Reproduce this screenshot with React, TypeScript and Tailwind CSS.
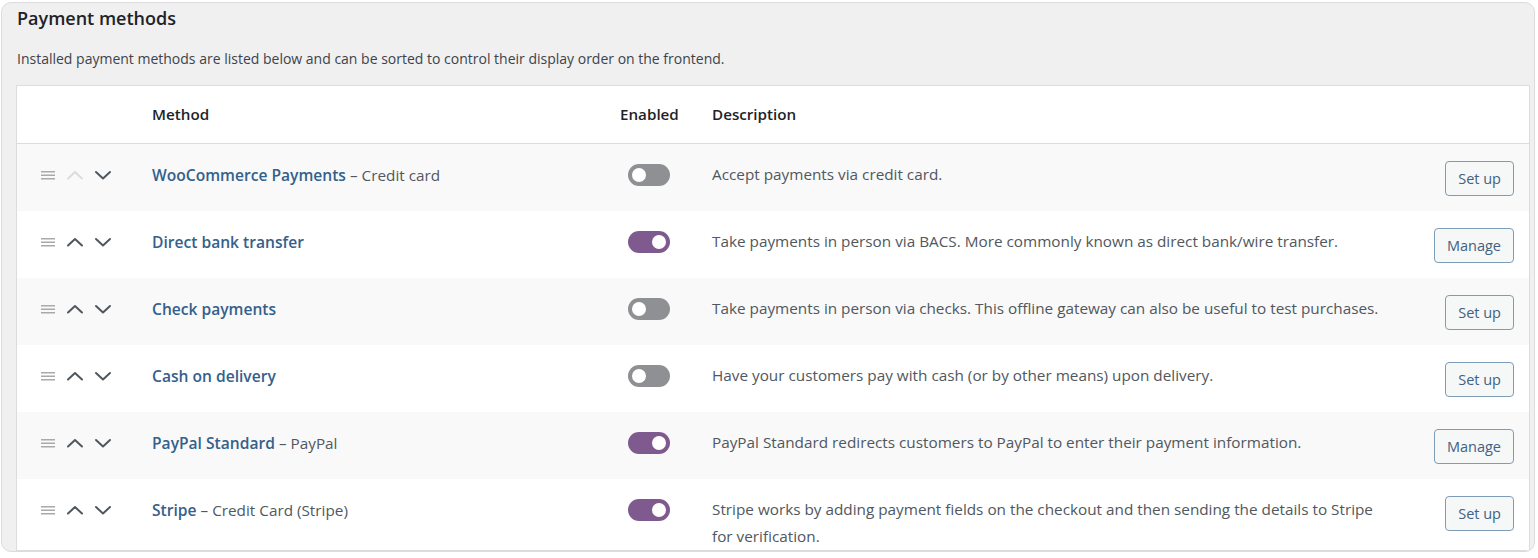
import React from "react";

type Row = {
  name: string;
  sub?: string;
  enabled: boolean;
  desc: string;
  action: "Set up" | "Manage";
  upDisabled?: boolean;
};

const rows: Row[] = [
  { name: "WooCommerce Payments", sub: "Credit card", enabled: false, desc: "Accept payments via credit card.", action: "Set up", upDisabled: true },
  { name: "Direct bank transfer", enabled: true, desc: "Take payments in person via BACS. More commonly known as direct bank/wire transfer.", action: "Manage" },
  { name: "Check payments", enabled: false, desc: "Take payments in person via checks. This offline gateway can also be useful to test purchases.", action: "Set up" },
  { name: "Cash on delivery", enabled: false, desc: "Have your customers pay with cash (or by other means) upon delivery.", action: "Set up" },
  { name: "PayPal Standard", sub: "PayPal", enabled: true, desc: "PayPal Standard redirects customers to PayPal to enter their payment information.", action: "Manage" },
  { name: "Stripe", sub: "Credit Card (Stripe)", enabled: true, desc: "Stripe works by adding payment fields on the checkout and then sending the details to Stripe for verification.", action: "Set up" },
];

function Handle() {
  return (
    <svg width="15" height="12" viewBox="0 0 15 12" className="block">
      <rect x="0" y="2" width="14" height="1.5" fill="#a7aaad" />
      <rect x="0" y="5.5" width="14" height="1.5" fill="#a7aaad" />
      <rect x="0" y="9" width="14" height="1.5" fill="#a7aaad" />
    </svg>
  );
}

function Chevron({ up, disabled }: { up?: boolean; disabled?: boolean }) {
  return (
    <svg width="18" height="12" viewBox="0 0 18 12" className="block">
      <path
        d={up ? "M2 9.5 L9 3 L16 9.5" : "M2 3 L9 9.5 L16 3"}
        fill="none"
        stroke={disabled ? "#dcdcde" : "#50575e"}
        strokeWidth="2"
        strokeLinecap="round"
        strokeLinejoin="round"
      />
    </svg>
  );
}

function Toggle({ on }: { on: boolean }) {
  return on ? (
    <div className="w-[42px] h-[22px] rounded-full bg-[#7f5a8e] flex items-center justify-end pr-[2px]">
      <div className="w-[18px] h-[18px] rounded-full bg-white border-[2px] border-[#7f5a8e]" />
    </div>
  ) : (
    <div className="w-[42px] h-[22px] rounded-full bg-[#8f9093] flex items-center pl-[2px]">
      <div className="w-[18px] h-[18px] rounded-full bg-white border-[2px] border-[#8f9093]" />
    </div>
  );
}

export default function App() {
  return (
    <div
      className="w-[1538px] h-[558px] bg-white pt-[2px] pl-[1px] pr-[3px] pb-[6px]"
      style={{ fontFamily: '"Open Sans", "Noto Sans", sans-serif' }}
    >
      <div className="h-full overflow-hidden rounded-[10px] border border-[#dcdcde] bg-[#f0f0f1] pl-[14px] pr-[4px]">
        <h2 className="pt-[3px] text-[18px] leading-[24px] font-semibold text-[#1d2327] pl-[1px]">Payment methods</h2>
        <p className="mt-[20px] text-[14px] leading-[18px] text-[#3c434a] pl-[1px]">
          Installed payment methods are listed below and can be sorted to control their display order on the frontend.
        </p>
        <div className="mt-[17px] bg-white border border-[#dcdcde]">
          <div className="grid grid-cols-[135px_468px_92px_1fr_auto] h-[58px] items-center border-b border-[#dcdcde] text-[15.2px] font-semibold text-[#1d2327]">
            <div />
            <div>Method</div>
            <div>Enabled</div>
            <div>Description</div>
            <div />
          </div>
          {rows.map((r, i) => (
            <div
              key={r.name}
              className={`grid grid-cols-[135px_468px_92px_1fr_auto] min-h-[67px] items-start ${i % 2 === 0 ? "bg-[#f9f9f9]" : "bg-white"}`}
            >
              <div className="flex items-center gap-[10px] pl-[24px] pt-[25px]">
                <Handle />
                <Chevron up disabled={r.upDisabled} />
                <Chevron />
              </div>
              <div className="pt-[19px] text-[15.3px] leading-[24px] text-[#50575e]">
                <span className="font-semibold text-[#34608c] text-[15.6px]">{r.name}</span>
                {r.sub && <span> – {r.sub}</span>}
              </div>
              <div className="pt-[20px] pl-[8px]">
                <Toggle on={r.enabled} />
              </div>
              <div className="pt-[17px] text-[15.3px] leading-[27px] text-[#50575e] max-w-[685px]">{r.desc}</div>
              <div className="pt-[17px] pr-[15px] flex justify-end">
                <button className="h-[35px] px-[12px] rounded-[4px] border border-[#7d9cb5] bg-[#f6f7f7] text-[14.5px] text-[#3e6283]">
                  {r.action}
                </button>
              </div>
            </div>
          ))}
        </div>
      </div>
    </div>
  );
}
